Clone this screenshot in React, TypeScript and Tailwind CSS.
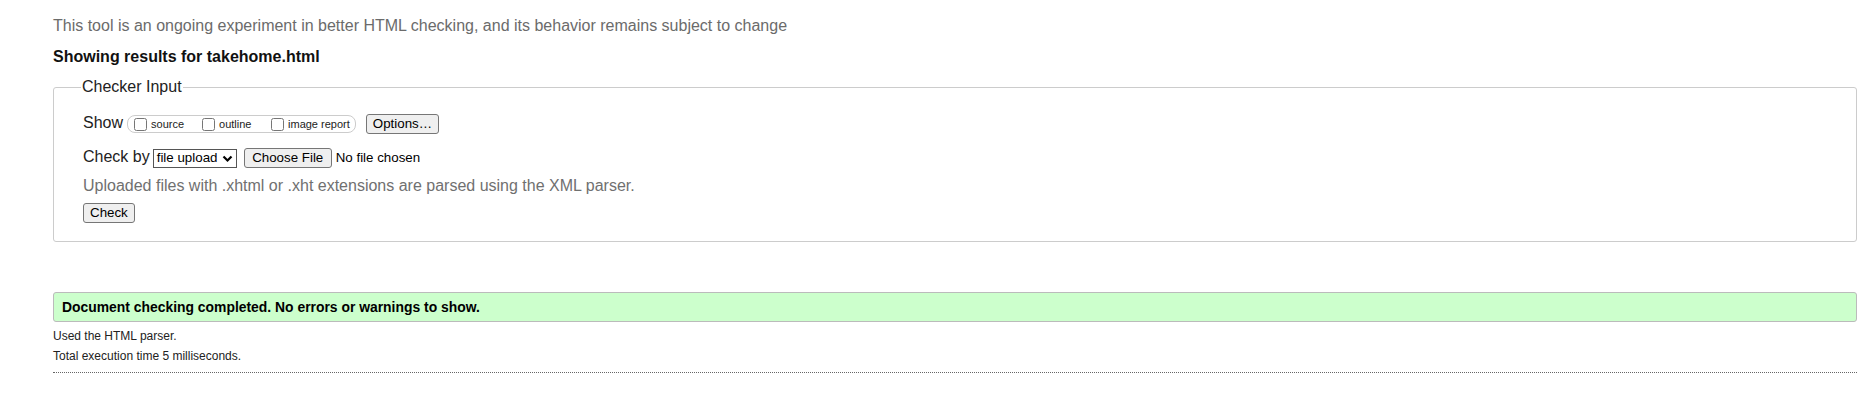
import React from "react";

function Btn({ children, className = "" }: { children: React.ReactNode; className?: string }) {
  return (
    <button
      type="button"
      className={
        "flex h-[20px] items-center rounded-[3px] border border-[#767676] bg-[#efefef] px-[6px] text-[13.33px] leading-[16px] text-black " +
        className
      }
    >
      {children}
    </button>
  );
}

export default function App() {
  return (
    <div className="min-h-screen bg-white pl-[53px] pr-[18px] pt-[17px] font-['Liberation_Sans',Arial,sans-serif] text-[#222]">
      <p className="text-[16px] leading-[18px] text-[#6b6b6b]">
        This tool is an ongoing experiment in better HTML checking, and its behavior remains subject to change
      </p>
      <h2 className="mt-[13px] text-[16px] font-bold leading-[18px] text-[#111]">
        Showing results for takehome.html
      </h2>

      <fieldset className="mt-[12px] rounded-[3px] border border-[#ccc] pb-[18px] pl-[29px] pr-[29px] pt-[18px]">
        <legend className="-ml-[2px] px-[1px] text-[16px] leading-[18px] text-[#222]">Checker Input</legend>

        <div className="flex h-[20px] items-center">
          <span className="mb-[2px] text-[16px] leading-[18px]">Show</span>
          <div className="ml-[4px] flex h-[18px] items-center rounded-[8px] border border-[#ccc] pl-[6px] pr-[5px]">
            <label className="flex w-[68px] items-center">
              <input type="checkbox" className="m-0 h-[13px] w-[13px]" />
              <span className="ml-[4px] text-[11px] leading-[13px]">source</span>
            </label>
            <label className="flex w-[69px] items-center">
              <input type="checkbox" className="m-0 h-[13px] w-[13px]" />
              <span className="ml-[4px] text-[11px] leading-[13px]">outline</span>
            </label>
            <label className="flex items-center">
              <input type="checkbox" className="m-0 h-[13px] w-[13px]" />
              <span className="ml-[4px] text-[11px] leading-[13px]">image report</span>
            </label>
          </div>
          <Btn className="ml-[10px]">Options…</Btn>
        </div>

        <div className="mt-[14px] flex h-[20px] items-center">
          <span className="mb-[2px] text-[16px] leading-[18px]">Check by</span>
          <div className="ml-[3px] flex h-[19px] w-[84px] items-center justify-between border border-[#555] bg-white pl-[3px] pr-[3px] text-[13.33px] leading-[16px] text-black">
            <span>file upload</span>
            <svg width="11" height="8" viewBox="0 0 11 8" className="mt-[1px]">
              <path d="M1.5 1.5 L5.5 5.5 L9.5 1.5" fill="none" stroke="#000" strokeWidth="2.2" />
            </svg>
          </div>
          <Btn className="ml-[7px] w-[88px] justify-center px-[7px]">Choose File</Btn>
          <span className="ml-[4px] text-[13.33px] leading-[16px] text-black">No file chosen</span>
        </div>

        <p className="mt-[9px] text-[16px] leading-[18px] text-[#707070]">
          Uploaded files with .xhtml or .xht extensions are parsed using the XML parser.
        </p>

        <div className="mt-[8px] flex">
          <Btn>Check</Btn>
        </div>
      </fieldset>

      <div className="mt-[50px] flex h-[30px] items-center rounded-[3px] border border-[#bbb] bg-[#ccffcc] pl-[8px] text-[13.9px] font-bold leading-[16px] text-black">
        Document checking completed. No errors or warnings to show.
      </div>

      <p className="mt-[7px] text-[12px] leading-[14px] text-[#222]">Used the HTML parser.</p>
      <p className="mt-[6px] text-[12px] leading-[14px] text-[#222]">Total execution time 5 milliseconds.</p>
      <div className="mt-[9px] border-t border-dotted border-[#666]"></div>
    </div>
  );
}
